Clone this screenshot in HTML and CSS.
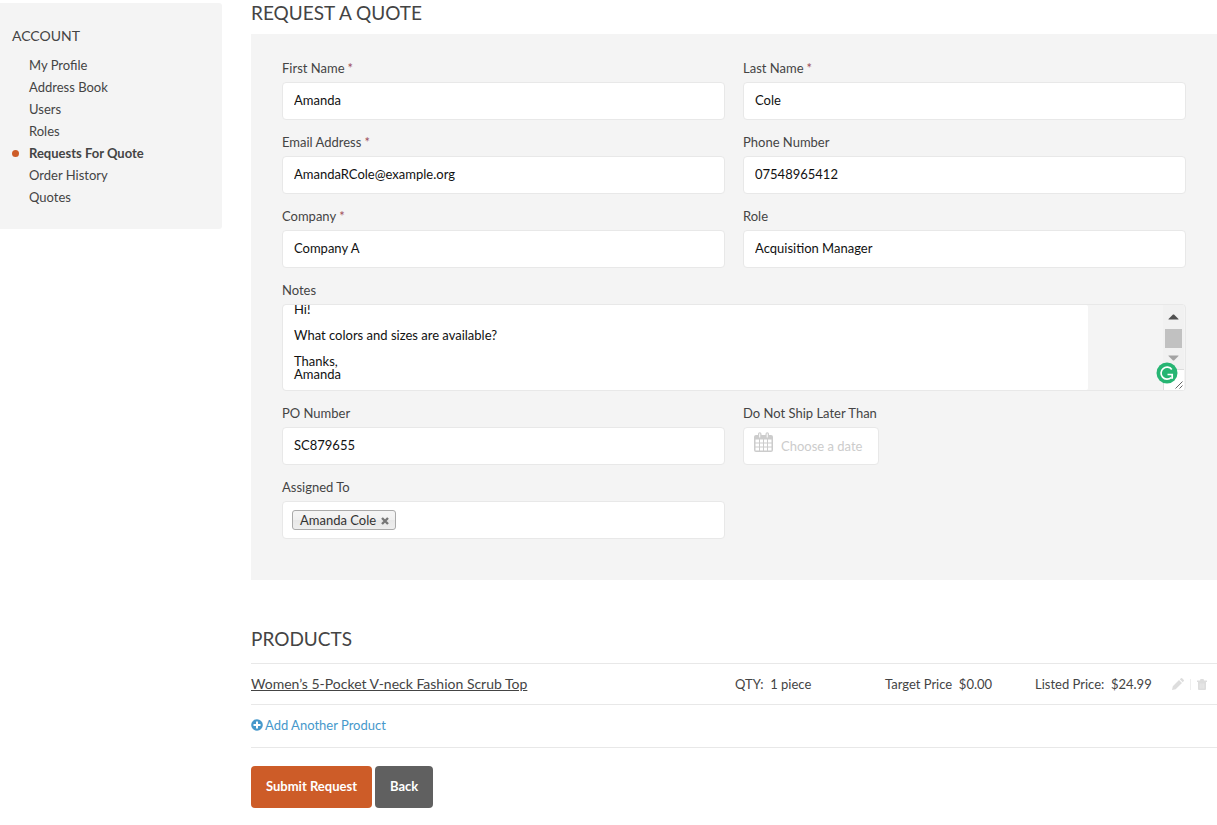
FILE: index.html
```html
<!DOCTYPE html>
<html lang="en">
<head>
<meta charset="utf-8">
<title>Request a Quote</title>
<link rel="stylesheet" href="styles.css">
</head>
<body>
<div class="page">
  <aside class="sidebar">
    <h2 class="sidebar-title">ACCOUNT</h2>
    <nav>
      <ul class="menu">
        <li><a href="#">My Profile</a></li>
        <li><a href="#">Address Book</a></li>
        <li><a href="#">Users</a></li>
        <li><a href="#">Roles</a></li>
        <li class="active"><a href="#">Requests For Quote</a></li>
        <li><a href="#">Order History</a></li>
        <li><a href="#">Quotes</a></li>
      </ul>
    </nav>
  </aside>
  <main class="main">
    <h1 class="title">REQUEST A QUOTE</h1>
    <form id="quote" class="panel">
      <div class="field"><label for="first">First Name<span class="req">*</span></label><input class="box" id="first" type="text" value="Amanda"></div>
      <div class="field"><label for="last">Last Name<span class="req">*</span></label><input class="box" id="last" type="text" value="Cole"></div>
      <div class="field"><label for="email">Email Address<span class="req">*</span></label><input class="box" id="email" type="text" value="AmandaRCole@example.org"></div>
      <div class="field"><label for="phone">Phone Number</label><input class="box" id="phone" type="text" value="07548965412"></div>
      <div class="field"><label for="company">Company<span class="req">*</span></label><input class="box" id="company" type="text" value="Company A"></div>
      <div class="field"><label for="role">Role</label><input class="box" id="role" type="text" value="Acquisition Manager"></div>
      <div class="field wide">
        <label for="notes">Notes</label>
        <div class="notes">
          <textarea id="notes" spellcheck="false">Hi!

What colors and sizes are available?

Thanks,
Amanda</textarea>
          <div class="scroll">
            <svg class="arrow" width="11" height="6" viewBox="0 0 11 6"><path d="M.5 5.500V5L5 .500h1L10.500 5v.5z" fill="#505050"/></svg>
            <span class="thumb"></span>
            <svg class="arrow" width="11" height="6" viewBox="0 0 11 6"><path d="M.5 .5h10V1L6 5.500H5L.5 1z" fill="#a3a3a3"/></svg>
            <span class="grip"><svg width="8" height="8" viewBox="0 0 8 8"><path d="M.5 7.500l7-7M4.500 7.500l3-3" stroke="#666" fill="none"/></svg></span>
          </div>
          <svg class="checker" width="22" height="22" viewBox="0 0 22 22"><circle cx="11" cy="11" r="10.500" fill="#27b573"/><path d="M15.800 7.500A6 6 0 1 0 15.200 15.500M11.500 12.500h4.700v4.300" stroke="#fff" stroke-width="1.700" fill="none"/></svg>
        </div>
      </div>
      <div class="field"><label for="po">PO Number</label><input class="box" id="po" type="text" value="SC879655"></div>
      <div class="field">
        <label for="ship">Do Not Ship Later Than</label>
        <div class="box date">
          <svg width="19" height="20" viewBox="0 0 19 20"><path fill="#ccc" fill-rule="evenodd" d="M2 3h2V2a1.500 1.500 0 0 1 3.500 0v1h4V2a1.500 1.500 0 0 1 3.500 0v1h2a2 2 0 0 1 2 2v13a2 2 0 0 1-2 2H2a2 2 0 0 1-2-2V5a2 2 0 0 1 2-2zM5.200 1.500v4h1v-4zM12.700 1.500v4h1v-4zM1.500 7.500v3H5v-3zM6 7.500v3h3v-3zM10 7.500v3h3v-3zM14 7.500v3h3.500v-3zM1.500 11.500v3H5v-3zM6 11.500v3h3v-3zM10 11.500v3h3v-3zM14 11.500v3h3.500v-3zM1.500 15.500v3H5v-3zM6 15.500v3h3v-3zM10 15.500v3h3v-3zM14 15.500v3h3.500v-3z"/></svg>
          <input id="ship" type="text" placeholder="Choose a date">
        </div>
      </div>
      <div class="field">
        <span class="label" id="assigned">Assigned To</span>
        <div class="box tags" role="group" aria-labelledby="assigned">
          <span class="tag">Amanda Cole <button type="button" aria-label="Remove"><svg width="8" height="8" viewBox="0 0 8 8"><path d="M1 1l6 6M7 1L1 7" stroke="#777" stroke-width="2.400"/></svg></button></span>
        </div>
      </div>
    </form>

    <h2 class="title products-title">PRODUCTS</h2>
    <div class="product">
      <a class="name" href="#">Women’s 5-Pocket V-neck Fashion Scrub Top</a>
      <span>QTY:&nbsp; 1 piece</span>
      <span>Target Price&nbsp; $0.00</span>
      <span>Listed Price:&nbsp; $24.99</span>
      <div class="actions">
        <button type="button" aria-label="Edit"><svg width="12" height="12" viewBox="0 0 12 12"><path fill="#ddd" d="M0 12l.8-3.700L7 2l3 3-6.300 6.200zM7.800 1.300 9 .2q.6-.4 1.100 0l1.700 1.700q.4.6 0 1.100l-1.100 1.200z"/></svg></button>
        <button type="button" class="delete" aria-label="Delete"><svg width="10" height="11" viewBox="0 0 10 11"><path fill="#ddd" d="M0 1.500h3L3.500 0h3L7 1.500h3v1.500H0zM1 3h8v7q0 1-1 1H2q-1 0-1-1z"/><path d="M3.200 4.500v5M5 4.500v5M6.800 4.500v5" stroke="#eee" stroke-width=".7"/></svg></button>
      </div>
    </div>
    <div class="add"><a href="#"><svg width="12" height="12" viewBox="0 0 12 12"><circle cx="6" cy="6" r="5.800" fill="#4698cb"/><path d="M6 2.500v7M2.500 6h7" stroke="#fff" stroke-width="2"/></svg>Add Another Product</a></div>
    <div class="buttons">
      <button class="btn primary" type="submit" form="quote">Submit Request</button>
      <button class="btn" type="button">Back</button>
    </div>
  </main>
</div>
<script src="app.js"></script>
</body>
</html>
```
FILE: styles.css
```css
* { box-sizing: border-box; }
body { margin: 0; background: #fff; color: #444; font: 13px/18px Lato, sans-serif; }
input, textarea, button { font: inherit; color: inherit; }
button { border: 0; padding: 0; background: none; cursor: pointer; }
svg { display: block; flex: none; }
.page { display: grid; grid-template-columns: 222px 1fr; column-gap: 29px; align-items: start; }
.sidebar { margin-top: 3px; padding: 24px 12px 21px; background: #f4f4f4; border-radius: 0 3px 3px 0; }
.sidebar-title { margin: 0 0 9px; font-size: 14px; line-height: 18px; font-weight: 400; }
.menu { list-style: none; margin: 0; padding: 0; }
.menu li { display: flex; align-items: center; height: 22px; padding-left: 17px; }
.menu a { color: inherit; text-decoration: none; }
.menu .active { padding-left: 0; font-weight: 700; }
.menu .active::before { content: ""; width: 7px; height: 7px; margin-right: 10px; border-radius: 50%; background: #cd5c28; }
.title { margin: 0; font-size: 19px; line-height: 26px; font-weight: 400; }
.panel { display: grid; grid-template-columns: 1fr 1fr; gap: 14px 18px; margin-top: 8px; padding: 26px 31px 41px; background: #f4f4f4; }
.field { display: flex; flex-direction: column; min-width: 0; }
.wide { grid-column: 1 / -1; }
.field label, .label { line-height: 16px; margin-bottom: 6px; }
.req { margin-left: 3px; color: #a0505a; }
.box { width: 100%; height: 38px; padding: 0 11px; border: 1px solid #e8e8e8; border-radius: 4px; background: #fff; color: #111; outline: 0; }
input.box { padding-bottom: 2px; }
.notes { position: relative; display: flex; height: 87px; border: 1px solid #e8e8e8; border-radius: 4px; }
.notes textarea { flex: 1; margin: 0 75px 0 0; padding: 11px; border: 0; border-radius: 4px 2px 2px 4px; background: #fff; color: #111; line-height: 13px; resize: none; overflow: hidden; outline: 0; }
.scroll { display: flex; flex-direction: column; align-items: center; width: 21px; margin-right: 1px; padding-top: 9px; background: #f1f1f1; }
.thumb { width: 17px; height: 19px; margin: 9px 0 7px; background: #c1c1c1; }
.grip { display: flex; justify-content: flex-end; align-items: flex-end; width: 21px; margin-top: auto; height: 21px; padding: 1px; background: #fff; border: solid #ddd; border-width: 1px 0 0 1px; }
.checker { position: absolute; right: 7px; bottom: 6px; }
.date { display: flex; width: 136px; padding: 4px 10px; gap: 8px; }
.date input { flex: 1; min-width: 0; height: 28px; border: 0; padding: 0; background: none; outline: 0; }
.date input::placeholder { color: #ccc; opacity: 1; }
.tags { display: flex; align-items: center; padding: 0 9px; }
.tag { display: flex; align-items: center; gap: 5px; height: 20px; padding: 0 6px 0 7px; border: 1px solid #aaa; border-radius: 3px; background: linear-gradient(#f4f4f4 20%, #f0f0f0 50%, #e8e8e8 52%, #eee); color: #333; }
.tag button { margin-top: 2px; }
.products-title { margin: 46px 0 11px; }
.product { display: grid; grid-template-columns: 1fr 150px 150px 137px 45px; align-items: baseline; padding: 11px 0; border-top: 1px solid #e8e8e8; }
.name { color: inherit; font-size: 14px; }
.actions { display: flex; align-items: center; align-self: center; }
.delete { margin-left: 6px; padding-left: 6px; border-left: 1px solid #eee; }
.add { display: flex; align-items: center; height: 44px; padding-bottom: 2px; border: solid #e8e8e8; border-width: 1px 0; }
.add a { display: flex; align-items: center; gap: 2px; color: #4698cb; text-decoration: none; }
.buttons { display: flex; gap: 3px; margin: 18px 0; }
.btn { height: 42px; padding: 0 15px 2px; border-radius: 4px; background: #606060; color: #fff; font-weight: 700; }
.primary { background: #cd5c28; }
```
FILE: app.js
```js
document.getElementById('notes').scrollTop = 13;
```
